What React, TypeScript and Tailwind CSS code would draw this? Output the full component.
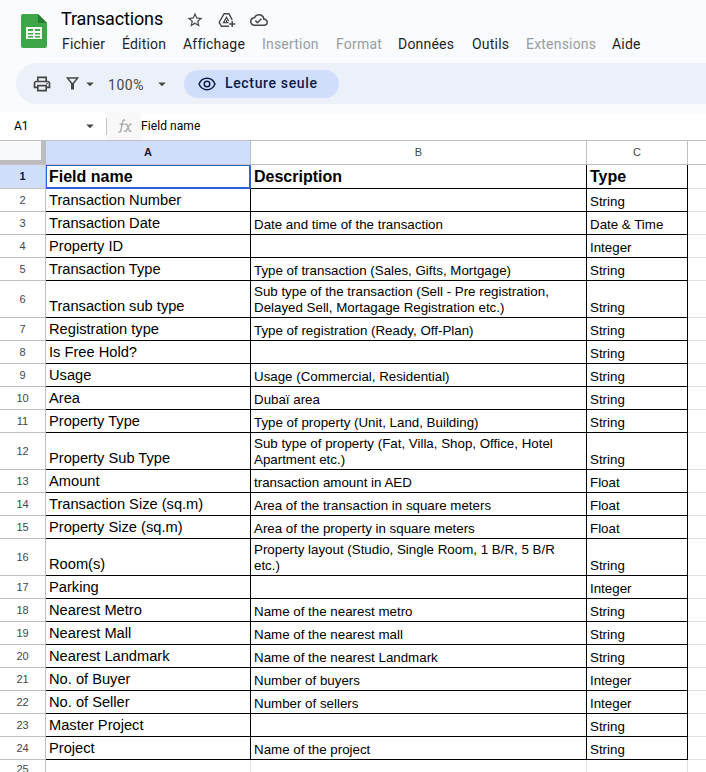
import React from 'react';
import { MdOutlinePrint, MdArrowDropDown, MdStarBorder, MdOutlineCloudDone } from 'react-icons/md';

type Row = { a: string; b?: string[]; c: string; tall?: boolean };

const rows: Row[] = [
  { a: 'Transaction Number', c: 'String' },
  { a: 'Transaction Date', b: ['Date and time of the transaction'], c: 'Date & Time' },
  { a: 'Property ID', c: 'Integer' },
  { a: 'Transaction Type', b: ['Type of transaction (Sales, Gifts, Mortgage)'], c: 'String' },
  { a: 'Transaction sub type', b: ['Sub type of the transaction (Sell - Pre registration,', 'Delayed Sell, Mortagage Registration etc.)'], c: 'String', tall: true },
  { a: 'Registration type', b: ['Type of registration (Ready, Off-Plan)'], c: 'String' },
  { a: 'Is Free Hold?', c: 'String' },
  { a: 'Usage', b: ['Usage (Commercial, Residential)'], c: 'String' },
  { a: 'Area', b: ['Dubaï area'], c: 'String' },
  { a: 'Property Type', b: ['Type of property (Unit, Land, Building)'], c: 'String' },
  { a: 'Property Sub Type', b: ['Sub type of property (Fat, Villa, Shop, Office, Hotel', 'Apartment etc.)'], c: 'String', tall: true },
  { a: 'Amount', b: ['transaction amount in AED'], c: 'Float' },
  { a: 'Transaction Size (sq.m)', b: ['Area of the transaction in square meters'], c: 'Float' },
  { a: 'Property Size (sq.m)', b: ['Area of the property in square meters'], c: 'Float' },
  { a: 'Room(s)', b: ['Property layout (Studio, Single Room, 1 B/R, 5 B/R', 'etc.)'], c: 'String', tall: true },
  { a: 'Parking', c: 'Integer' },
  { a: 'Nearest Metro', b: ['Name of the nearest metro'], c: 'String' },
  { a: 'Nearest Mall', b: ['Name of the nearest mall'], c: 'String' },
  { a: 'Nearest Landmark', b: ['Name of the nearest Landmark'], c: 'String' },
  { a: 'No. of Buyer', b: ['Number of buyers'], c: 'Integer' },
  { a: 'No. of Seller', b: ['Number of sellers'], c: 'Integer' },
  { a: 'Master Project', c: 'String' },
  { a: 'Project', b: ['Name of the project'], c: 'String' },
];

const menu = [
  { label: 'Fichier', box: 'w-[60px]' },
  { label: 'Édition', box: 'w-[61px]' },
  { label: 'Affichage', box: 'w-[79px]' },
  { label: 'Insertion', box: 'w-[74px]', off: true },
  { label: 'Format', box: 'w-[62px]', off: true },
  { label: 'Données', box: 'w-[74px]' },
  { label: 'Outils', box: 'w-[54px]' },
  { label: 'Extensions', box: 'w-[86px]', off: true },
  { label: 'Aide', box: 'w-[40px]' },
];

const cols = 'grid grid-cols-[46px_205px_336px_101px_1fr] grid-rows-[100%]';

function SheetsLogo() {
  return (
    <svg className="h-[34px] w-[26px]" viewBox="0 0 26 34">
      <path d="M2 0H17l9 9v23a2 2 0 0 1-2 2H2a2 2 0 0 1-2-2V2a2 2 0 0 1 2-2z" fill="#3da649" />
      <path d="M17 0l9 9h-9z" fill="#267d32" />
      <path d="M5 13h16v12H5z" fill="#f3faf3" />
      <path d="M7 15h5v2H7zM14 15h5v2h-5zM7 19h5v1.500H7zM14 19h5v1.500h-5zM7 22h5v1.500H7zM14 22h5v1.500h-5z" fill="#3da649" />
    </svg>
  );
}

function DriveAddIcon() {
  return (
    <svg className="h-[16px] w-[18px]" viewBox="0 0 18 16" fill="none" stroke="currentColor" strokeWidth="1.400">
      <path d="M14.200 7.800L10.900 1.700H6.100L1.200 10.500L3.500 14.300H11" />
      <path d="M10.500 10.700H5.500L8.500 5.300L10.700 9.200M8.500 8v2.700" strokeWidth="1.300" />
      <path d="M14.200 9v6M11.200 12h6" strokeWidth="1.500" />
    </svg>
  );
}

function FilterIcon() {
  return (
    <svg className="h-[13px] w-[13px]" viewBox="0 0 13 13" fill="none" stroke="currentColor">
      <path d="M1.300 1H11.700L6.500 7.300z" strokeWidth="1.500" />
      <path d="M6.500 6v6.500" strokeWidth="3" />
    </svg>
  );
}

function EyeIcon() {
  return (
    <svg className="h-[14px] w-[18px]" viewBox="0 0 18 14" fill="none" stroke="currentColor" strokeWidth="1.500">
      <path d="M1 7C2.500 3.500 5.500 1.300 9 1.300S15.500 3.500 17 7C15.500 10.500 12.500 12.700 9 12.700S2.500 10.500 1 7z" />
      <circle cx="9" cy="7" r="2.800" />
    </svg>
  );
}

function FxIcon() {
  return (
    <svg className="h-[14px] w-[14px]" viewBox="0 0 14 14" fill="none" stroke="#acacac" strokeWidth="1.400">
      <path d="M7.300 1.600C6.500.500 5 .900 4.700 2.300L2.900 11.500C2.600 13 1.500 13.400.400 12.700M1.600 5.300h4.600M7 5.300h1.700l3 7H13.500M13.600 5.300h-1.500L7.700 12.300H6.200M12 5.300h1.600M6.500 12.300h2" />
    </svg>
  );
}

export default function App() {
  return (
    <div className="flex h-[772px] w-[706px] flex-col overflow-hidden bg-[#f9fbfe] font-['Liberation_Sans',Arial,sans-serif] text-black">
      <header className="flex h-[63px] shrink-0 pl-[21px]">
        <div className="w-10 pt-[14px]">
          <SheetsLogo />
        </div>
        <div className="font-[Roboto,sans-serif]">
          <div className="flex h-[34px] items-center pt-1">
            <span className="w-[125px] whitespace-nowrap text-[18px] leading-6 tracking-[-0.150px]">Transactions</span>
            <div className="flex items-center gap-[14px] pt-0.5 text-[#444746]">
              <MdStarBorder size={18} />
              <DriveAddIcon />
              <MdOutlineCloudDone size={18} />
            </div>
          </div>
          <nav className="flex pl-px text-[14px] leading-5 tracking-[0.200px]">
            {menu.map((m) => (
              <span key={m.label} className={`${m.box} whitespace-nowrap ${m.off ? 'text-[#999ca0]' : 'text-[#1f1f1f]'}`}>
                {m.label}
              </span>
            ))}
          </nav>
        </div>
      </header>

      <div className="ml-4 flex h-[41px] shrink-0 items-center rounded-l-full bg-[#ecf0f9] pl-[16px] font-[Roboto,sans-serif] text-[#444746]">
        <MdOutlinePrint size={20} />
        <div className="ml-[14px]">
          <FilterIcon />
        </div>
        <MdArrowDropDown size={18} className="ml-[2px]" />
        <span className="ml-[9px] w-[45px] pt-[3px] text-[14px] leading-5 tracking-[0.550px]">100%</span>
        <MdArrowDropDown size={18} className="mt-px" />
        <div className="ml-[13px] flex h-7 w-[155px] items-center rounded-full bg-[#d0defb] pl-[14px] text-[#0b1b4a]">
          <EyeIcon />
          <span className="ml-[9px] whitespace-nowrap text-[14px] font-medium tracking-[0.650px]">Lecture seule</span>
        </div>
      </div>

      <div className="mt-2 flex h-7 shrink-0 items-center bg-white font-[Roboto,sans-serif]">
        <span className="w-[81px] pl-[14px] text-[12px]">A1</span>
        <MdArrowDropDown size={18} className="text-[#444746]" />
        <div className="ml-[7px] h-[17px] w-px bg-[#c4c4c4]" />
        <div className="flex h-7 w-[34px] items-center bg-[#f8f8f8] pl-[11px]">
          <FxIcon />
        </div>
        <div className="flex h-7 flex-1 items-center border-t-2 border-[#f9fbfe] pb-0.5 text-[12px] tracking-[0.080px]">Field name</div>
      </div>

      <div className={`${cols} h-[25px] shrink-0 border-y border-[#c0c0c0] bg-white text-center text-[11px] leading-[23px] text-[#444746]`}>
        <div className="border-b-4 border-r-[5px] border-[#bdbdbd] bg-[#f8f9fa]" />
        <div className="border-r border-[#c0c0c0] bg-[#d0defb] font-bold text-[#0b1b4a]">A</div>
        <div className="border-r border-[#c0c0c0]">B</div>
        <div className="border-r border-[#c0c0c0]">C</div>
        <div />
      </div>

      <div className={`${cols} h-6 shrink-0 bg-white text-[16px] font-bold leading-[23px]`}>
        <div className="border-b border-r border-[#c0c0c0] bg-[#d0defb] text-center text-[11px] text-[#0b1b4a]">1</div>
        <div className="border-b-2 border-r-2 border-t border-l border-[#2b62d9] pl-[2px] leading-[21px]">Field name</div>
        <div className="border-b border-r border-black pl-[3px]">Description</div>
        <div className="border-b border-r border-black pl-[3px]">Type</div>
        <div className="border-b border-[#e1e1e1]" />
      </div>

      {rows.map((r, i) => (
        <div key={r.a} className={`${cols} ${r.tall ? 'h-[37px]' : 'h-[23px]'} shrink-0 bg-white`}>
          <div className="flex items-center justify-center border-b border-r border-[#c0c0c0] pb-px text-[11px] leading-3 text-[#444746]">{i + 2}</div>
          <div className="flex items-end border-b border-r border-black pb-[2px] pl-[3px] text-[14.667px] leading-[17px]">{r.a}</div>
          <div className="flex flex-col justify-end whitespace-nowrap border-b border-r border-black pb-px pl-[3px] text-[13.333px] leading-4">
            {(r.b ?? []).map((line) => (
              <span key={line}>{line}</span>
            ))}
          </div>
          <div className="flex items-end border-b border-r border-black pb-px pl-[3px] text-[13.333px] leading-4">{r.c}</div>
          <div className="border-b border-[#e1e1e1]" />
        </div>
      ))}

      <div className={`${cols} h-[23px] shrink-0 bg-white`}>
        <div className="border-r border-[#c0c0c0] pt-[3px] text-center text-[11px] leading-3 text-[#444746]">25</div>
        <div className="border-r border-[#e1e1e1]" />
        <div className="border-r border-[#e1e1e1]" />
        <div className="border-r border-[#e1e1e1]" />
        <div />
      </div>
    </div>
  );
}
